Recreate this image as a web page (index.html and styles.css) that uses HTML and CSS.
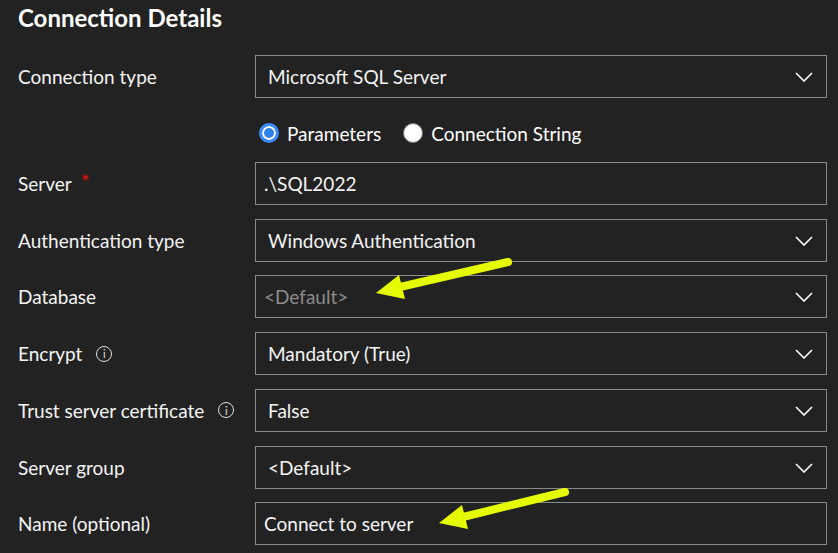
FILE: index.html
```html
<!DOCTYPE html>
<html lang="en">
<head>
  <meta charset="UTF-8">
  <title>Connection Details</title>
  <link rel="stylesheet" href="styles.css">
</head>
<body>
  <div class="panel">
    <h1 class="title">Connection Details</h1>
    <div class="form">
      <label class="label">Connection type</label>
      <div class="field select">
        <span>Microsoft SQL Server</span>
        <svg class="chevron" width="18" height="10" viewBox="0 0 18 10"><path d="M1 1 L9 9 L17 1" fill="none" stroke="#fff" stroke-width="1.6"/></svg>
      </div>

      <div></div>
      <div class="radios">
        <span class="radio"><span class="dot checked"></span>Parameters</span>
        <span class="radio"><span class="dot"></span>Connection String</span>
      </div>

      <label class="label">Server <span class="req">*</span></label>
      <div class="field input"><span>.\SQL2022</span></div>

      <label class="label">Authentication type</label>
      <div class="field select">
        <span>Windows Authentication</span>
        <svg class="chevron" width="18" height="10" viewBox="0 0 18 10"><path d="M1 1 L9 9 L17 1" fill="none" stroke="#fff" stroke-width="1.6"/></svg>
      </div>

      <label class="label">Database</label>
      <div class="field select input">
        <span class="placeholder">&lt;Default&gt;</span>
        <svg class="chevron" width="18" height="10" viewBox="0 0 18 10"><path d="M1 1 L9 9 L17 1" fill="none" stroke="#fff" stroke-width="1.6"/></svg>
      </div>

      <label class="label">Encrypt <span class="info">i</span></label>
      <div class="field select">
        <span>Mandatory (True)</span>
        <svg class="chevron" width="18" height="10" viewBox="0 0 18 10"><path d="M1 1 L9 9 L17 1" fill="none" stroke="#fff" stroke-width="1.6"/></svg>
      </div>

      <label class="label">Trust server certificate <span class="info">i</span></label>
      <div class="field select">
        <span>False</span>
        <svg class="chevron" width="18" height="10" viewBox="0 0 18 10"><path d="M1 1 L9 9 L17 1" fill="none" stroke="#fff" stroke-width="1.6"/></svg>
      </div>

      <label class="label">Server group</label>
      <div class="field select">
        <span>&lt;Default&gt;</span>
        <svg class="chevron" width="18" height="10" viewBox="0 0 18 10"><path d="M1 1 L9 9 L17 1" fill="none" stroke="#fff" stroke-width="1.6"/></svg>
      </div>

      <label class="label">Name (optional)</label>
      <div class="field input"><span>Connect to server</span></div>
    </div>
  </div>

  <!-- annotation arrows drawn over the screenshot -->
  <svg class="arrows" width="838" height="553" viewBox="0 0 838 553">
    <g stroke="#e4fb00" stroke-width="8" stroke-linecap="round" fill="#e4fb00">
      <line x1="508" y1="262" x2="400" y2="287"/>
      <line x1="565" y1="492" x2="463" y2="517"/>
    </g>
    <g fill="#e4fb00">
      <polygon points="376,293 399,275 405,299"/>
      <polygon points="439,523 462,505 468,529"/>
    </g>
  </svg>
</body>
</html>
```

FILE: styles.css
```css
body {
  margin: 0;
  background: #222222;
  color: #ffffff;
  font-family: Lato, "Open Sans", sans-serif;
  width: 838px;
  height: 553px;
  overflow: hidden;
  position: relative;
}
.panel {
  padding: 0 11px 0 18px;
}
.title {
  margin: 0;
  font-size: 24px;
  font-weight: 700;
  line-height: 36px;
  height: 55px;
}
.form {
  display: grid;
  grid-template-columns: 237px 572px;
  grid-template-rows: 43px 36.7px repeat(7, 43px);
  row-gap: 13.7px;
}
.label {
  display: flex;
  align-items: center;
  font-size: 19px;
  color: #f4f4f4;
}
.req {
  color: #e51400;
  margin-left: 9px;
  font-size: 21px;
  margin-top: -4px;
}
.info {
  display: inline-flex;
  align-items: center;
  justify-content: center;
  width: 14px;
  height: 14px;
  border: 1.3px solid #e0e0e0;
  border-radius: 50%;
  font-size: 11px;
  margin-left: 14px;
  color: #e0e0e0;
}
.field {
  display: flex;
  align-items: center;
  border: 1px solid #8a8a8a;
  font-size: 19px;
  color: #f4f4f4;
  padding: 0 12px;
}
.field.input {
  padding-left: 8px;
}
.select {
  justify-content: space-between;
}
.chevron {
  margin-right: 1px;
  margin-top: 1px;
}
.placeholder {
  color: #8c8c8c;
}
.radios {
  display: flex;
  align-items: center;
  gap: 22px;
  padding-top: 6px;
  padding-left: 4px;
  font-size: 19px;
}
.radio {
  display: flex;
  align-items: center;
  gap: 8px;
}
.dot {
  width: 18px;
  height: 18px;
  border-radius: 50%;
  background: #ffffff;
  border: 1px solid #777;
}
.dot.checked {
  width: 14px;
  height: 14px;
  background: #2f7fe8;
  border: 3px solid #3c8cff;
  box-shadow: inset 0 0 0 2px #ffffff;
}
.arrows {
  position: absolute;
  left: 0;
  top: 0;
}
```
